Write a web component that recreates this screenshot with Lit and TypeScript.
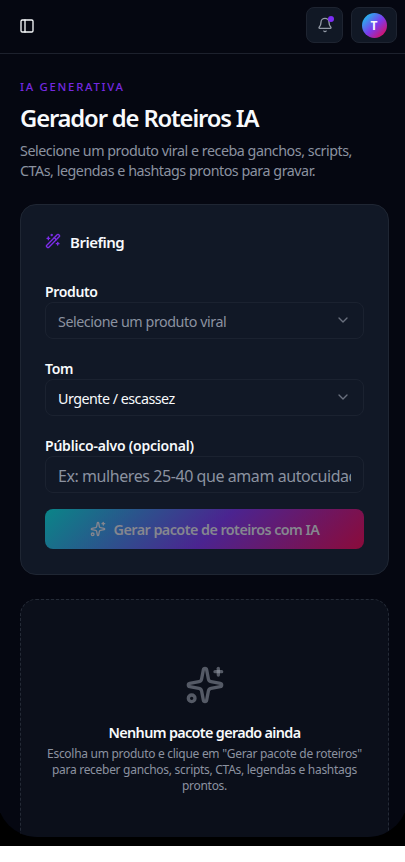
import { LitElement, html, css, svg } from "lit";
import { customElement } from "lit/decorators.js";

const sparkles = svg`
  <path d="M11.017 2.814a1 1 0 0 1 1.966 0l1.051 5.558a2 2 0 0 0 1.594 1.594l5.558 1.051a1 1 0 0 1 0 1.966l-5.558 1.051a2 2 0 0 0-1.594 1.594l-1.051 5.558a1 1 0 0 1-1.966 0l-1.051-5.558a2 2 0 0 0-1.594-1.594l-5.558-1.051a1 1 0 0 1 0-1.966l5.558-1.051a2 2 0 0 0 1.594-1.594z"/>
  <path d="M20 2v4"/><path d="M22 4h-4"/><circle cx="4" cy="20" r="2"/>`;
const panel = svg`<rect width="18" height="18" x="3" y="3" rx="2"/><path d="M9 3v18"/>`;
const bell = svg`<path d="M10.268 21a2 2 0 0 0 3.464 0"/><path d="M3.262 15.326A1 1 0 0 0 4 17h16a1 1 0 0 0 .74-1.673C19.41 13.956 18 12.499 18 8A6 6 0 0 0 6 8c0 4.499-1.411 5.956-2.738 7.326"/>`;
const wand = svg`<path d="m21.64 3.64-1.28-1.28a1.21 1.21 0 0 0-1.72 0L2.36 18.64a1.21 1.21 0 0 0 0 1.72l1.28 1.28a1.2 1.2 0 0 0 1.72 0L21.64 5.36a1.2 1.2 0 0 0 0-1.72"/><path d="m14 7 3 3"/><path d="M5 6v4"/><path d="M19 14v4"/><path d="M10 2v2"/><path d="M7 8H3"/><path d="M21 16h-4"/><path d="M11 3H9"/>`;
const chevron = svg`<path d="m6 9 6 6 6-6"/>`;

const icon = (shape: unknown, cls: string) =>
  html`<svg class="icon ${cls}" viewBox="0 0 24 24" aria-hidden="true">${shape}</svg>`;

@customElement("app-root")
export class AppRoot extends LitElement {
  static styles = css`
    :host { display: block; height: 862px; overflow: hidden; background: #fff; font-family: "Noto Sans", "Open Sans", sans-serif; color: #f8fafc; }
    * { box-sizing: border-box; }
    h1, h2, h3, p { margin: 0; }
    .bezel { height: 846px; background: #000; overflow: hidden; }
    .screen { height: 837px; width: 411px; margin-left: -3px; padding: 0 3px; background: #050711; border-radius: 0 0 40px 40px; overflow: hidden; }
    .icon { display: block; flex: none; fill: none; stroke: currentColor; stroke-width: 2; stroke-linecap: round; stroke-linejoin: round; }
    header { height: 54px; border-bottom: 1px solid #1d212d; display: flex; align-items: flex-start; padding: 7px 8px 0 19px; }
    .toggle { width: 16px; height: 16px; margin: 11px auto 0 0; }
    .tile { height: 36px; border: 1px solid #1e2431; border-radius: 8px; background: #111825; display: flex; align-items: center; justify-content: center; position: relative; padding: 0; color: inherit; font: inherit; }
    .alerts { width: 37px; margin-right: 8px; color: #949ba7; }
    .bell { width: 16px; height: 16px; }
    .dot { position: absolute; width: 6px; height: 6px; border-radius: 50%; background: #7c2df5; top: 8px; right: 8px; }
    .account { width: 46px; }
    .avatar { width: 25px; height: 25px; border-radius: 50%; background: linear-gradient(135deg, #12cfec 5%, #7c3aed 52%, #e60a4e 95%); display: flex; align-items: center; justify-content: center; font-size: 12px; font-weight: 700; }
    main { padding: 25px 16px 0 20px; }
    .eyebrow { font-size: 11.3px; line-height: 16px; letter-spacing: 1.75px; font-weight: 550; color: #7529e0; }
    h1 { font-size: 23.8px; line-height: 32px; margin-top: 7px; font-weight: 600; letter-spacing: -1.15px; white-space: nowrap; }
    .intro { font-size: 14.3px; line-height: 20px; margin-top: 7px; letter-spacing: -.47px; color: #8b92a0; white-space: nowrap; }
    .card { margin-top: 23px; height: 371px; padding: 24px; border: 1px solid #1f2633; border-radius: 16px; background: #111826; }
    h2 { display: flex; align-items: center; gap: 9px; height: 25px; font-size: 15px; font-weight: 600; letter-spacing: -.5px; }
    .wand { width: 16px; height: 16px; color: #7c2de9; margin-top: -1px; }
    .group { display: flex; flex-direction: column; height: 77px; font-size: 14px; }
    .first { margin-top: 28px; }
    .label { line-height: 19px; height: 20px; font-weight: 600; letter-spacing: -.35px; white-space: nowrap; }
    .audience { letter-spacing: -.21px; }
    .field { height: 37px; border: 1px solid #1b2230; border-radius: 8px; padding: 2px 12px 0; display: flex; align-items: center; justify-content: space-between; letter-spacing: -.45px; font-size: 14.3px; white-space: nowrap; }
    .tone { letter-spacing: -.52px; }
    .muted { color: #8b92a0; }
    .chev { width: 16px; height: 16px; color: #69707d; margin-top: -3px; }
    .typed { font-size: 16px; letter-spacing: -.43px; }
    .clip { overflow: hidden; }
    .submit { width: 100%; height: 40px; margin-top: -4px; border: 0; padding: 0; border-radius: 8px; display: flex; align-items: center; justify-content: center; gap: 8px; color: #85868f; font: 600 14.4px "Noto Sans", sans-serif; letter-spacing: -.57px; white-space: nowrap; background: linear-gradient(135deg, #0a8588 0%, #4b2490 53%, #8b0b3a 100%); }
    .spark { width: 16px; height: 16px; }
    .empty { margin-top: 24px; height: 300px; border: 1px dashed #252b37; border-radius: 16px; background: #0b0f1a; display: flex; flex-direction: column; align-items: center; padding-top: 65px; text-align: center; }
    .hero { width: 40px; height: 40px; color: rgba(160, 166, 178, .5); }
    h3 { margin-top: 18px; font-size: 14.4px; line-height: 20px; font-weight: 600; letter-spacing: -.66px; }
    .hint { font-size: 12px; line-height: 16px; margin-top: 3px; letter-spacing: -.29px; color: #8b92a0; white-space: nowrap; }
  `;

  render() {
    return html`<div class="bezel"><div class="screen">
      <header>
        ${icon(panel, "toggle")}
        <button class="tile alerts" aria-label="Notificações">${icon(bell, "bell")}<span class="dot"></span></button>
        <button class="tile account"><span class="avatar">T</span></button>
      </header>
      <main>
        <p class="eyebrow">IA GENERATIVA</p>
        <h1>Gerador de Roteiros IA</h1>
        <p class="intro">Selecione um produto viral e receba ganchos, scripts,<br>CTAs, legendas e hashtags prontos para gravar.</p>
        <section class="card">
          <h2>${icon(wand, "wand")}<span>Briefing</span></h2>
          <div class="group first"><span class="label">Produto</span>
            <div class="field muted"><span>Selecione um produto viral</span>${icon(chevron, "chev")}</div></div>
          <div class="group"><span class="label">Tom</span>
            <div class="field"><span class="tone">Urgente / escassez</span>${icon(chevron, "chev")}</div></div>
          <div class="group"><span class="label audience">Público-alvo (opcional)</span>
            <div class="field typed muted"><span class="clip">Ex: mulheres 25-40 que amam autocuidado</span></div></div>
          <button class="submit">${icon(sparkles, "spark")}<span>Gerar pacote de roteiros com IA</span></button>
        </section>
        <section class="empty">
          ${icon(sparkles, "hero")}
          <h3>Nenhum pacote gerado ainda</h3>
          <p class="hint">Escolha um produto e clique em "Gerar pacote de roteiros"<br>para receber ganchos, scripts, CTAs, legendas e hashtags<br>prontos.</p>
        </section>
      </main>
    </div></div>`;
  }
}
